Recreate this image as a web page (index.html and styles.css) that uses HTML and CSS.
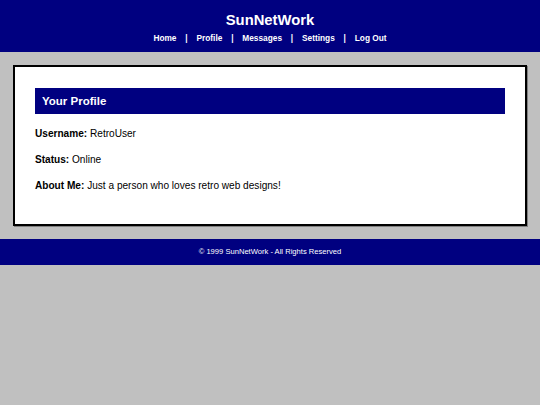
FILE: index.html
```html
<!DOCTYPE html>
<html lang="en">
<head>
<meta charset="utf-8">
<title>SunNetWork - Profile</title>
<link rel="stylesheet" href="styles.css">
</head>
<body>
<header class="site-header">
  <h1 class="site-title">SunNetWork</h1>
  <nav class="site-nav">
    <a href="#">Home</a><span class="sep">|</span>
    <a href="#">Profile</a><span class="sep">|</span>
    <a href="#">Messages</a><span class="sep">|</span>
    <a href="#">Settings</a><span class="sep">|</span>
    <a href="#">Log Out</a>
  </nav>
</header>
<main class="main">
  <section class="card">
    <h2 class="card-title">Your Profile</h2>
    <p class="field"><b>Username:</b> RetroUser</p>
    <p class="field"><b>Status:</b> Online</p>
    <p class="field"><b>About Me:</b> Just a person who loves retro web designs!</p>
  </section>
</main>
<footer class="site-footer">&copy; 1999 SunNetWork - All Rights Reserved</footer>
</body>
</html>
```

FILE: styles.css
```css
html, body {
  margin: 0;
  padding: 0;
}
body {
  background: #c0c0c0;
  font-family: "Liberation Sans", Arial, sans-serif;
  color: #000;
}
.site-header {
  background: #000080;
  color: #fff;
  text-align: center;
  padding: 10.5px 0 8.5px;
}
.site-title {
  margin: 0 0 4px;
  font-size: 14.8px;
  line-height: 18px;
  font-weight: bold;
}
.site-nav {
  display: flex;
  justify-content: center;
  align-items: center;
  gap: 8.85px;
  font-size: 8.3px;
  font-weight: bold;
  line-height: 11px;
}
.site-nav a {
  color: #fff;
  text-decoration: none;
}
.main {
  padding: 13px 13px;
}
.card {
  background: #fff;
  border: 2px solid #000;
  box-shadow: 1px 1px 0 #808080;
  padding: 21px 20px 18px;
}
.card-title {
  margin: 0 0 13px;
  background: #000080;
  color: #fff;
  font-size: 11.5px;
  line-height: 26px;
  padding: 0 7px;
  font-weight: bold;
}
.field {
  margin: 14px 0;
  font-size: 10.1px;
  line-height: 12px;
}
.site-footer {
  background: #000080;
  color: #fff;
  text-align: center;
  font-size: 7.6px;
  line-height: 26px;
}
```
